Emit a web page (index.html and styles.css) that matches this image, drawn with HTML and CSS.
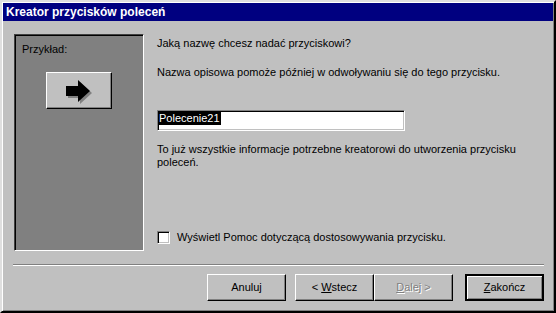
FILE: index.html
```html
<!DOCTYPE html>
<html lang="pl">
<head>
  <meta charset="UTF-8" />
  <title>Kreator przycisków poleceń</title>
  <link rel="stylesheet" href="styles.css">
</head>
<body>

  <div class="window">
    <div class="titlebar">Kreator przycisków poleceń</div>

    <div class="body">
      <div class="main">

        <!-- Preview panel -->
        <div class="preview">
          <div class="preview-label">Przykład:</div>
          <div class="preview-button">
            <svg width="28" height="24" viewBox="0 0 28 24">
              <polygon points="2,8 14,8 14,2 26,13 14,24 14,18 2,18" fill="#808080" />
              <polygon points="0,6 12,6 12,0 24,11 12,22 12,16 0,16" fill="#000" />
            </svg>
          </div>
        </div>

        <!-- Questions -->
        <div class="form">
          <p class="q1">Jaką nazwę chcesz nadać przyciskowi?</p>
          <p class="q2">Nazwa opisowa pomoże później w odwoływaniu się do tego przycisku.</p>
          <div class="textbox"><span class="selected">Polecenie21</span></div>
          <p class="info">To już wszystkie informacje potrzebne kreatorowi do utworzenia przycisku poleceń.</p>
          <label class="check">
            <span class="checkbox"></span>
            <span>Wyświetl Pomoc dotyczącą dostosowywania przycisku.</span>
          </label>
        </div>

      </div>

      <div class="separator"></div>

      <div class="buttons">
        <div class="btn"><span>Anuluj</span></div>
        <div class="btn gap"><span>&lt; <u>W</u>stecz</span></div>
        <div class="btn disabled"><span><u>D</u>alej &gt;</span></div>
        <div class="btn default"><span><u>Z</u>akończ</span></div>
      </div>
    </div>
  </div>

</body>
</html>
```

FILE: styles.css
```css
body {
  margin: 0;
  font-family: 'Liberation Sans', Arial, sans-serif;
  font-size: 11px;
  line-height: 13px;
  color: #000;
  background: #c0c0c0;
}

.window {
  box-sizing: border-box;
  width: 556px;
  height: 313px;
  padding: 1px;
  background: #c0c0c0;
  border: 2px solid;
  border-color: #dfdfdf #000 #000 #dfdfdf;
  box-shadow: inset 1px 1px 0 #fff, inset -1px -1px 0 #808080;
  overflow: hidden;
}

.titlebar {
  height: 18px;
  line-height: 18px;
  padding-left: 3px;
  background: #000080;
  color: #fff;
  font-weight: bold;
  font-size: 12px;
}

.body {
  padding: 13px 9px 0 11px;
}

.main {
  display: flex;
  gap: 13px;
  height: 217px;
}

/* Left preview panel */
.preview {
  box-sizing: border-box;
  width: 130px;
  height: 217px;
  background: #808080;
  border: 1px solid;
  border-color: #404040 #fff #fff #404040;
  box-shadow: inset 1px 1px 0 #000;
  padding: 8px 0 0 7px;
}

.preview-label {
  margin-bottom: 16px;
}

.preview-button {
  box-sizing: border-box;
  width: 66px;
  height: 37px;
  margin-left: 24px;
  background: #c0c0c0;
  border: 1px solid;
  border-color: #fff #000 #000 #fff;
  box-shadow: inset -1px -1px 0 #808080;
  display: flex;
  align-items: center;
  justify-content: center;
  padding: 2px 0 0 2px;
}

/* Right side */
.form {
  flex: 1;
  display: flex;
  flex-direction: column;
}

.form p {
  margin: 0;
}

.q1 {
  margin-top: 3px !important;
}

.q2 {
  margin-top: 16px !important;
}

.textbox {
  box-sizing: border-box;
  width: 248px;
  height: 21px;
  margin-top: 31px;
  background: #fff;
  border: 1px solid;
  border-color: #808080 #fff #fff #808080;
  box-shadow: inset 1px 1px 0 #000, inset -1px -1px 0 #c0c0c0;
  padding: 1px 0 0 1px;
}

.selected {
  display: inline-block;
  background: #000;
  color: #fff;
  padding: 0 1px 0 0;
}

.info {
  margin-top: 12px !important;
  width: 370px;
}

.check {
  display: flex;
  align-items: center;
  gap: 7px;
  margin-top: 62px;
}

.checkbox {
  box-sizing: border-box;
  width: 13px;
  height: 13px;
  background: #fff;
  border: 1px solid;
  border-color: #808080 #fff #fff #808080;
  box-shadow: inset 1px 1px 0 #000, inset -1px -1px 0 #c0c0c0;
}

.separator {
  margin-top: 13px;
  margin-left: -1px;
  height: 1px;
  background: #808080;
  border-bottom: 1px solid #fff;
}

/* Buttons */
.buttons {
  display: flex;
  justify-content: flex-end;
  margin-top: 8px;
}

.btn {
  box-sizing: border-box;
  width: 79px;
  height: 27px;
  display: flex;
  align-items: center;
  justify-content: center;
  background: #c0c0c0;
  border: 1px solid;
  border-color: #fff #000 #000 #fff;
  box-shadow: inset -1px -1px 0 #808080;
  white-space: pre;
}

.btn.gap {
  margin-left: 9px;
}

.btn.default {
  margin-left: 12px;
  border: 2px solid #000;
  box-shadow: inset 1px 1px 0 #fff, inset -1px -1px 0 #808080;
}

.btn.disabled {
  color: #808080;
  text-shadow: 1px 1px 0 #fff;
}
```
